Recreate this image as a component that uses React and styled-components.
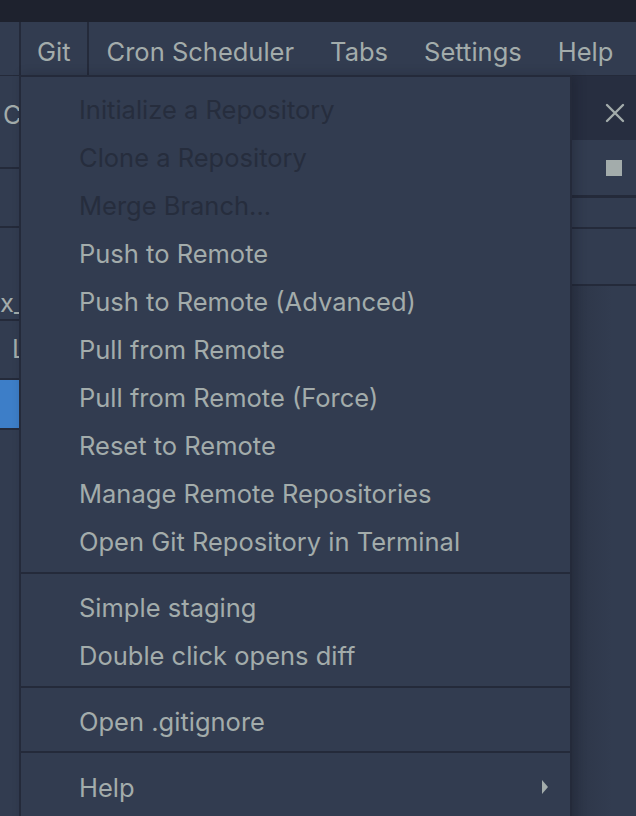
import React from 'react';
import styled, { createGlobalStyle } from 'styled-components';

const Global = createGlobalStyle`
  html, body {
    margin: 0;
    padding: 0;
    background: #323c50;
    overflow: hidden;
  }
  body {
    font-family: Inter, "Liberation Sans", sans-serif;
    -webkit-font-smoothing: antialiased;
  }
`;

const TEXT = '#a3acab';
const LINE = '#242a3a';

const Frame = styled.div`
  width: 636px;
  height: 816px;
  display: flex;
  flex-direction: column;
  background: #323c50;
  overflow: hidden;
`;

const TitleStrip = styled.div`
  height: 22px;
  background: #1e222e;
  flex-shrink: 0;
`;

const MenuBar = styled.div`
  height: 53px;
  display: flex;
  align-items: stretch;
  padding-left: 19px;
  border-bottom: 1px solid ${LINE};
  background: #323c50;
  position: relative;
  z-index: 5;
`;

const MenuItem = styled.div`
  position: relative;
  display: flex;
  align-items: center;
  flex-shrink: 0;
  white-space: nowrap;
  padding: 5px 18px 0 18px;
  font-size: 25.5px;
  color: ${TEXT};
  background: #323c50;
  z-index: 1;
`;

const OpenMenuItem = styled(MenuItem)`
  padding-left: 16px;
  padding-right: 16px;
  border-left: 2px solid ${LINE};
  border-right: 2px solid ${LINE};
  margin-bottom: -1px;
  z-index: 3;
`;

const Dropdown = styled.div`
  position: absolute;
  top: 53px;
  left: -2px;
  width: 549px;
  height: 760px;
  background: #323c50;
  border: 2px solid ${LINE};
  border-bottom: none;
  z-index: -1;
  padding-top: 8px;
  box-shadow: 4px 0 10px rgba(15, 18, 28, 0.25);
`;

const Group = styled.div`
  display: flex;
  flex-direction: column;
  padding: ${p => p.$pad || '0 0 8px'};
  border-bottom: ${p => (p.$last ? 'none' : `2px solid ${LINE}`)};
`;

const Entry = styled.div`
  height: 48px;
  display: flex;
  align-items: center;
  justify-content: space-between;
  padding: 0 22px 0 58px;
  font-size: 25.5px;
  color: ${p => (p.$disabled ? '#262d3d' : TEXT)};
  white-space: nowrap;
`;

const Caret = styled.span`
  width: 0;
  height: 0;
  border-top: 7px solid transparent;
  border-bottom: 7px solid transparent;
  border-left: 6px solid ${TEXT};
`;

const Workspace = styled.div`
  flex: 1;
  display: flex;
`;

const LeftPane = styled.div`
  width: 19px;
  display: flex;
  flex-direction: column;
  overflow: hidden;
`;

const PaneRow = styled.div`
  height: ${p => p.$h}px;
  display: flex;
  align-items: ${p => p.$align || 'center'};
  padding-left: ${p => p.$indent || 0}px;
  padding-bottom: ${p => p.$lift || 0}px;
  border-bottom: 2px solid ${LINE};
  background: ${p => (p.$selected ? '#3d7ec8' : 'transparent')};
  font-size: 25.5px;
  line-height: 1.2;
  color: ${TEXT};
  box-sizing: border-box;
  white-space: nowrap;
  overflow: hidden;
`;

const Middle = styled.div`
  flex: 1;
`;

const RightPane = styled.div`
  width: 64px;
  display: flex;
  flex-direction: column;
`;

const TabBar = styled.div`
  height: 64px;
  box-sizing: border-box;
  padding: 10px 11px 0 0;
  background: #272e40;
  display: flex;
  align-items: center;
  justify-content: flex-end;
`;

const ToolRow = styled.div`
  height: ${p => p.$h}px;
  display: flex;
  align-items: center;
  justify-content: flex-end;
  padding-right: 14px;
  border-bottom: ${p => p.$b || 2}px solid ${LINE};
  box-sizing: border-box;
`;

const StopSquare = styled.span`
  width: 16px;
  height: 16px;
  background: ${TEXT};
`;

const Rest = styled.div`
  flex: 1;
  background: linear-gradient(90deg, rgba(30,34,46,0.25), rgba(50,60,80,0) 40px);
`;

const groups = [
  { pad: '0 0 7px', items: [
    ['Initialize a Repository', true],
    ['Clone a Repository', true],
    ['Merge Branch...', true],
    ['Push to Remote'],
    ['Push to Remote (Advanced)'],
    ['Pull from Remote'],
    ['Pull from Remote (Force)'],
    ['Reset to Remote'],
    ['Manage Remote Repositories'],
    ['Open Git Repository in Terminal'],
  ] },
  { pad: '9px 0 7px', items: [['Simple staging'], ['Double click opens diff']] },
  { pad: '9px 0 6px', items: [['Open .gitignore']] },
];

export default function App() {
  return (
    <Frame>
      <Global />
      <TitleStrip />
      <MenuBar>
        <OpenMenuItem>
          Git
          <Dropdown>
            {groups.map((g, i) => (
              <Group key={i} $pad={g.pad}>
                {g.items.map(([label, disabled]) => (
                  <Entry key={label} $disabled={disabled}>{label}</Entry>
                ))}
              </Group>
            ))}
            <Group $pad="10px 0 0" $last>
              <Entry>
                Help
                <Caret />
              </Entry>
            </Group>
          </Dropdown>
        </OpenMenuItem>
        <MenuItem>Cron Scheduler</MenuItem>
        <MenuItem>Tabs</MenuItem>
        <MenuItem>Settings</MenuItem>
        <MenuItem>Help</MenuItem>
      </MenuBar>
      <Workspace>
        <LeftPane>
          <PaneRow $h={93} $indent={3} $lift={12}>C</PaneRow>
          <PaneRow $h={59} />
          <PaneRow $h={93} $align="flex-end" $indent={0}>x_</PaneRow>
          <PaneRow $h={59} $indent={12}>L</PaneRow>
          <PaneRow $h={50} $selected />
        </LeftPane>
        <Middle />
        <RightPane>
          <TabBar>
            <svg width="20" height="20" viewBox="0 0 20 20">
              <path d="M2 2 L18 18 M18 2 L2 18" stroke={TEXT} strokeWidth="2.4" strokeLinecap="round" />
            </svg>
          </TabBar>
          <ToolRow $h={58} $b={3}><StopSquare /></ToolRow>
          <ToolRow $h={31} />
          <ToolRow $h={57} />
          <Rest />
        </RightPane>
      </Workspace>
    </Frame>
  );
}
